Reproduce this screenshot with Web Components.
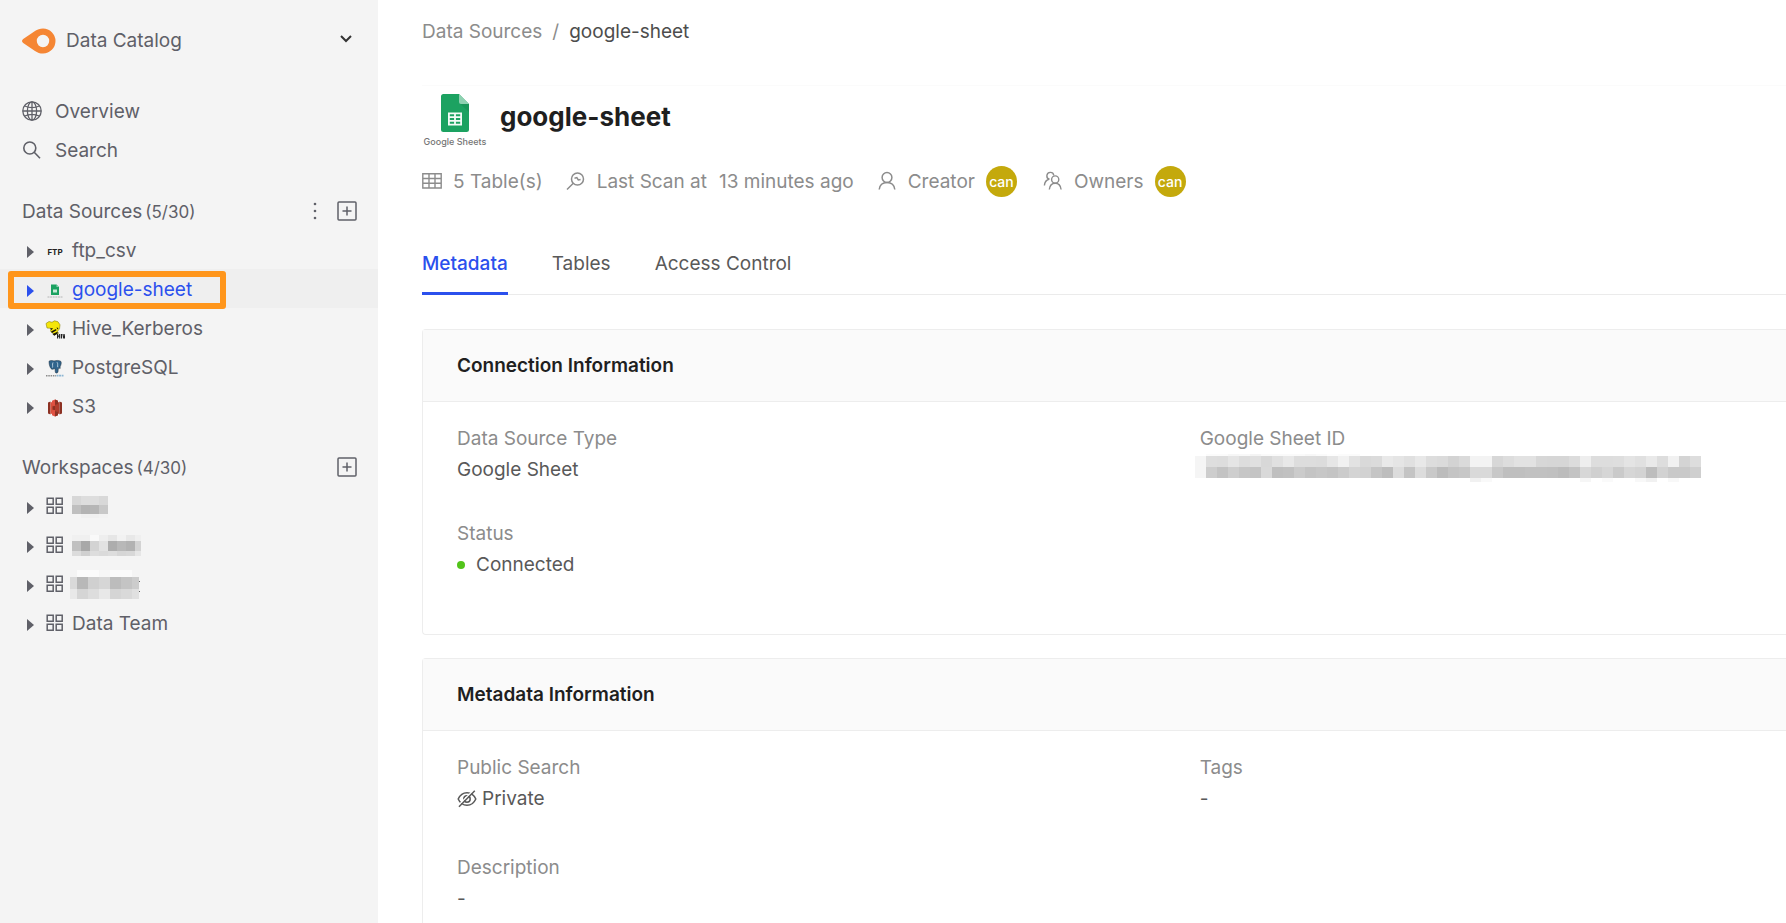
<!DOCTYPE html>
<html lang="en">
<head>
<meta charset="utf-8">
<title>google-sheet - Data Catalog</title>
<style>
  html, body { margin: 0; height: 100%; }
  body {
    font-family: Inter, "Liberation Sans", sans-serif;
    font-size: 19px;
    line-height: 31px;
    color: #595959;
    background: #fff;
    overflow: hidden;
  }
</style>
</head>
<body>
<catalog-app></catalog-app>

<script>
const define = (name, html, setup) => {
  const template = document.createElement('template');
  template.innerHTML = html;
  customElements.define(name, class extends HTMLElement {
    constructor() {
      super();
      this.attachShadow({ mode: 'open' }).append(template.content.cloneNode(true));
    }
    connectedCallback() { if (setup) setup(this, this.shadowRoot); }
  });
};

/* ---------- icons ---------- */
const line = (w, body) => `<g fill="none" stroke="currentColor" stroke-width="${w}">${body}</g>`;
const ICONS = {
  brand: [34, 26, `<path fill="#f58634" fill-rule="evenodd" d="M21 0.5a12.5 12.5 0 1 1 0 25c-3 0-5.600-1-8-2.600L1.200 15c-1.600-1-1.600-3 0-4L13 3.100C15.400 1.500 18 .5 21 .5zM21 6.800a6.200 6.200 0 1 0 0 12.400a6.200 6.200 0 0 0 0-12.400z"/>`],
  chevron: [14, 13, `<path d="M2 2l5 5 5-5" fill="none" stroke="#333" stroke-width="2"/>`],
  globe: [20, 20, line(1.3, `<circle cx="10" cy="10" r="9.200"/><ellipse cx="10" cy="10" rx="4.600" ry="9.200"/><path d="M10 .8v18.400M.8 10h18.400M2.700 5c4.500 2 10.100 2 14.600 0M2.700 15c4.500-2 10.100-2 14.600 0"/>`)],
  search: [20, 20, line(1.6, `<circle cx="7.800" cy="8" r="6"/><path d="M12.200 12.300L18 18.200"/>`)],
  dots: [4, 18, `<g fill="currentColor"><circle cx="2" cy="2" r="1.300"/><circle cx="2" cy="9" r="1.300"/><circle cx="2" cy="16" r="1.300"/></g>`],
  plus: [20, 20, line(1.5, `<rect x="1" y="1" width="18" height="18" rx="1"/><path d="M10 5.500v9M5.500 10h9"/>`)],
  caret: [8, 12, `<path fill="currentColor" d="M0 0L7 6L0 12z"/>`],
  grid: [20, 20, line(1.5, `<path d="M2.200 2.200h6v6h-6zM11.200 2.200h6v6h-6zM2.200 11.200h6v6h-6zM11.200 11.200h6v6h-6z"/>`)],
  sheets: [28, 38, `<path fill="#1ca261" d="M2.500 0H18l10 10v25.500a2.500 2.500 0 0 1-2.500 2.500h-23A2.500 2.500 0 0 1 0 35.500v-33A2.500 2.500 0 0 1 2.500 0z"/><path fill="#8ed1b1" d="M18 0l10 10H20a2 2 0 0 1-2-2z"/><path fill="#168a52" d="M19.500 10H28v8z" opacity=".5"/><path fill="#f4fbf7" fill-rule="evenodd" d="M7 18.500h14v13H7zM8.800 20.300v1.900h4.300v-1.900zM14.900 20.300v1.900h4.300v-1.900zM8.800 24v1.900h4.300V24zM14.900 24v1.900h4.300V24zM8.800 27.700v2h4.300v-2zM14.900 27.700v2h4.300v-2z"/>`],
  sheetsMini: [20, 20, `<path fill="#1ca261" d="M6 3.500h5.500L14 6v8H6z"/><path fill="#8ed1b1" d="M11.500 3.500L14 6h-2.500z"/><path fill="#c8ead8" d="M8 8.500h4v3H8z"/><path stroke="#b5b5b5" stroke-width="1" stroke-dasharray="2 .6" d="M2.500 16h15"/>`],
  hive: [20, 20, `<path fill="#f5e60a" stroke="#8a8210" stroke-width=".6" d="M1 3.500L4 1.500l3 .8 2.500-1.500 3.500 1 2 3-.5 4-2 2.500 1 2-4 1.500-4-3.500 .5-3L2 8z"/><path fill="#171405" d="M5 8.500l3-.5-1.500 2zM6 11.500l5-2.500 .5 1.300-4.500 2.700zM7.500 14l5-2.200 .3 1.500-3.500 2.500zM11.500 7.500l2 .5-1 1.500z"/><path fill="#222" d="M12 14h1.200v1.600h.9V14h1.200v4.500h-1.200v-1.700h-.9v1.700H12zM16 14h1.100v4.500H16zM17.500 14h1.100l.4 2.600.4-2.600h.6v4.500h-1.800z"/>`],
  postgres: [20, 20, `<path fill="#31648c" stroke="#1d2f3d" stroke-width=".5" d="M4 2.200C5.500 1 8 1.600 9 2c2-.8 5-.8 6.800.3 1 1.400.2 4-1 6l.8.7-2.300.6-.3 3.400c-.4 1.400-2.300 1.500-2.700.2l-.3-3.700-1.500.5C6 11.500 4 7 4 2.200z"/><path d="M8 3.500c-1 2 0 3.700-.5 5M12 3.200c1.300 1.600.3 3.200.8 5" fill="none" stroke="#d4e4ef" stroke-width=".8"/><path stroke="#8b8b8b" stroke-width="1.400" stroke-dasharray="1.500 .8" d="M1 16.700h10"/><path stroke="#8db6d3" stroke-width="1.700" stroke-dasharray="2 .6" d="M11.500 16.700h7"/>`],
  s3: [20, 20, `<path fill="#8c3123" d="M3 4.500l2.500-1v13l-2.500-1z"/><path fill="#d9503d" d="M5.500 4l4.500 1v10l-4.500 1z"/><path fill="#b03c2c" d="M10 5l4.500-1v12L10 15z"/><path fill="#8c3123" d="M14.500 3.500l2.500 1v11l-2.500 1z"/><path fill="#e05243" d="M10 1.500l3 1.300v3.700L10 7 7 6.500V2.800zM10 18.500l3-1.300v-3.700l-3-.5-3 .5v3.700z"/><path fill="#8c3123" d="M10 1.500l3 1.300v3.700L10 7zM10 18.500l3-1.300v-3.700l-3-.5zM7.500 8.300L10 8v4l-2.500-.3z"/>`],
  table: [20, 16, line(1.4, `<path d="M.8 .8h18.400v14.200H.8zM.8 5.500h18.400M.8 10.300h18.400M7 .8V15M13 .8V15"/>`)],
  scan: [20, 20, line(1.5, `<circle cx="11.500" cy="8" r="6"/><path d="M7.300 12.300L1 18.500M8.500 7.200l2.300-.6 1.500 2.400 2.300-.5"/>`)],
  user: [20, 20, line(1.5, `<circle cx="10" cy="6.500" r="4.900"/><path d="M2.200 18.500c.5-4.300 3.500-7 7.800-7s7.300 2.700 7.800 7"/>`)],
  team: [20, 20, line(1.4, `<circle cx="12.200" cy="8.500" r="3.600"/><path d="M6.300 18.500c.4-3.800 2.600-6.300 5.900-6.300s5.500 2.500 5.900 6.300M10.800 4.300A3.500 3.500 0 1 0 6.500 8.300M5.900 8.200c-2.600.7-4.200 2.800-4.500 6.300"/>`)],
  hidden: [20, 20, line(1.5, `<path d="M1.200 10C3 6 6 3.700 10 3.700S17 6 18.800 10C17 14 14 16.300 10 16.300S3 14 1.200 10z"/><circle cx="10" cy="10" r="3.200"/><path d="M16.300 1.500L.8 17" stroke="#fff" stroke-width="1.500"/><path d="M17.800 1.700L2 17.800"/>`)]
};

define('ui-icon', `<style>:host{display:block;flex:none}svg{display:block}</style>`, (el, root) => {
  const [w, h, body] = ICONS[el.getAttribute('name')];
  root.querySelector('svg')?.remove();
  root.innerHTML += `<svg width="${w}" height="${h}" viewBox="0 0 ${w} ${h}" aria-hidden="true">${body}</svg>`;
});

/* Redacted text: rows of [y, height, cells], each cell [x, width, grey as two hex digits]. */
const run = (x, w, greys) => greys.split(' ').map((g, i) => [x + i * w, w, g]);
const MOSAICS = {
  a: [40, 39, [[9, 9, run(2, 9, 'd7 dd dd d8')], [18, 9, run(2, 9, 'bf b3 b6 c8')], [27, 4, run(2, 9, 'f4 f0 f0 f2')]]],
  b: [72, 39, [[9, 6, run(2, 9, 'f0 f0 f9 ee e6 f2 e8')], [9, 6, [[65, 6, 'ef']]], [15, 10, run(2, 9, 'c0 a8 d3 e2 ad b8 b2')], [15, 10, [[65, 6, 'd3']]], [25, 5, run(2, 9, 'dc d0 dd da dd d6 d8')], [25, 5, [[65, 6, 'e6']]]]],
  c: [72, 39, [[5, 7, run(7, 11, 'fb fb f6 fa fa')], [12, 12, [[0, 7, 'd9'], [62, 7, 'cc']]], [12, 12, run(7, 11, 'b8 d0 d6 bc c4')], [24, 10, [[0, 7, 'e8'], [62, 7, 'e0']]], [24, 10, run(7, 11, 'd5 dd e8 d5 d9')], [16, 1, [[69, 1, '60']]], [26, 1, [[69, 1, '60']]]]],
  id: [520, 31, [
    [0, 2, run(12, 11, 'fb fb f6 f8 f4 fa fa fa fa f7 fa fd fb fb')],
    [2, 11, run(1, 11, 'f5 de dd e5 dd e0 d8 e0 e8 dd dd dc e6 f1 e2 d9 db e9 e5 e0 e8 dd db d3 da f3 f3 d7 dd e2 e2 d7 d6 d6 dc ee dd dd de e4 e0 e9 dd f1 d4 dd')],
    [13, 11, run(1, 11, 'f5 cd c3 ce c6 c4 d9 bf c1 cb c4 c7 c4 cb d4 d2 c5 bd dc c4 dc c9 bc c4 c7 d9 d9 c8 bf bf c1 c1 c0 bc c3 d7 d0 d6 ca d6 d3 bd d2 c9 c9 cf')],
    [24, 4, [[276, 11, 'f1'], [287, 11, 'f9'], [386, 11, 'f6'], [408, 11, 'fa'], [441, 11, 'f8'], [452, 11, 'f1'], [474, 11, 'f8']]]]]
};
define('redacted-text', `<style>:host{display:block;flex:none}svg{display:block}</style>`, (el, root) => {
  const [w, h, rows] = MOSAICS[el.getAttribute('pattern')];
  const rects = rows.map(([y, rh, cells]) => cells.map(([x, cw, g]) =>
    `<rect x="${x}" y="${y}" width="${cw}" height="${rh}" fill="#${g}${g}${g}"/>`).join('')).join('');
  root.innerHTML += `<svg width="${w}" height="${h}" shape-rendering="crispEdges" role="img" aria-label="hidden">${rects}</svg>`;
});

/* ---------- sidebar ---------- */
define('nav-link', `
  <style>
    :host { display: block; }
    a { display: flex; align-items: center; gap: 13px; height: 39px; padding-left: 22px; color: inherit; text-decoration: none; }
    .text { padding-top: 2px; }
  </style>
  <a href="#"><slot name="icon"></slot><span class="text"><slot></slot></span></a>`);

define('tree-item', `
  <style>
    :host { display: block; position: relative; }
    :host([selected]) { background: #efefef; color: #2b50ed; }
    a { display: flex; align-items: center; height: 39px; padding-left: 27px; color: inherit; text-decoration: none; }
    ui-icon { padding-top: 4px; margin-right: 10px; }
    .icon { display: flex; align-items: center; justify-content: center; width: 20px; margin-right: 7px; }
    .text { padding-top: 2px; }
    .mark { position: absolute; box-sizing: border-box; left: 8px; top: 2px; width: 218px; height: 38px; border: 6px solid #ff961c; border-radius: 3px; z-index: 1; pointer-events: none; }
    :host(:not([selected])) .mark { display: none; }
  </style>
  <a href="#"><ui-icon name="caret"></ui-icon><span class="icon"><slot name="icon"></slot></span><span class="text"><slot></slot></span></a>
  <div class="mark"></div>`);

define('tree-section', `
  <style>
    :host { display: block; margin-top: 22px; }
    header { display: flex; align-items: center; height: 39px; padding: 0 21px 0 22px; }
    h2 { flex: 1; margin: 0; padding-top: 2px; font-size: inherit; font-weight: 400; }
    small { margin-left: 3px; font-size: 17px; }
    button { display: flex; padding: 0; border: 0; background: none; color: inherit; }
    .more { margin-right: 20px; }
    :host(:not([menu])) .more { display: none; }
  </style>
  <header>
    <h2><slot name="title"></slot><small><slot name="count"></slot></small></h2>
    <button class="more" aria-label="More"><ui-icon name="dots"></ui-icon></button>
    <button aria-label="Add"><ui-icon name="plus"></ui-icon></button>
  </header>
  <slot></slot>`);

define('side-bar', `
  <style>
    :host { display: block; background: #f4f4f4; color: #5f6068; padding-top: 21px; }
    .brand { display: flex; align-items: center; width: 100%; height: 39px; margin-bottom: 31px; padding: 0 25px 0 22px; border: 0; background: none; font: inherit; color: inherit; text-align: left; }
    .brand span { flex: 1; margin-left: 10px; }
    .ftp { font-size: 8px; font-weight: 700; line-height: 20px; color: #222; padding-top: 4px; }
    .logo { padding-top: 4px; }
    redacted-text { margin-left: -2px; }
  </style>
  <button class="brand"><ui-icon name="brand"></ui-icon><span>Data Catalog</span><ui-icon name="chevron"></ui-icon></button>
  <nav>
    <nav-link><ui-icon slot="icon" name="globe"></ui-icon>Overview</nav-link>
    <nav-link><ui-icon slot="icon" name="search"></ui-icon>Search</nav-link>
  </nav>
  <tree-section menu>
    <span slot="title">Data Sources</span><span slot="count">(5/30)</span>
    <tree-item><span slot="icon" class="ftp">FTP</span>ftp_csv</tree-item>
    <tree-item selected><ui-icon slot="icon" class="logo" name="sheetsMini"></ui-icon>google-sheet</tree-item>
    <tree-item><ui-icon slot="icon" class="logo" name="hive"></ui-icon>Hive_Kerberos</tree-item>
    <tree-item><ui-icon slot="icon" class="logo" name="postgres"></ui-icon>PostgreSQL</tree-item>
    <tree-item><ui-icon slot="icon" class="logo" name="s3"></ui-icon>S3</tree-item>
  </tree-section>
  <tree-section>
    <span slot="title">Workspaces</span><span slot="count">(4/30)</span>
    <tree-item><ui-icon slot="icon" name="grid"></ui-icon><redacted-text pattern="a"></redacted-text></tree-item>
    <tree-item><ui-icon slot="icon" name="grid"></ui-icon><redacted-text pattern="b"></redacted-text></tree-item>
    <tree-item><ui-icon slot="icon" name="grid"></ui-icon><redacted-text pattern="c"></redacted-text></tree-item>
    <tree-item><ui-icon slot="icon" name="grid"></ui-icon>Data Team</tree-item>
  </tree-section>`);

/* ---------- page header ---------- */
define('crumb-trail', `
  <style>
    :host { display: block; padding: 16px 0 38px; border-bottom: 1px solid #fbfbfb; color: #8c8c8c; }
    nav { display: flex; gap: 10px; }
    a { color: inherit; text-decoration: none; }
    b { font-weight: 400; color: #4d4d4d; }
  </style>
  <nav aria-label="Breadcrumb"><a href="#">Data Sources</a><span>/</span><b>google-sheet</b></nav>`);

define('source-heading', `
  <style>
    :host { display: flex; align-items: flex-start; height: 75px; }
    figure { display: flex; flex-direction: column; align-items: center; width: 66px; margin: 8px 12px 0 0; }
    figcaption { font: 500 9px/20px Inter, sans-serif; color: #757575; white-space: nowrap; }
    h1 { margin: 10px 0 0; font-size: 26px; line-height: 42px; font-weight: 700; color: #1f1f1f; }
  </style>
  <figure><ui-icon name="sheets"></ui-icon><figcaption>Google Sheets</figcaption></figure>
  <h1><slot></slot></h1>`);

define('meta-item', `
  <style>:host { display: flex; align-items: center; gap: 11px; white-space: nowrap; }</style>
  <slot></slot>`);

define('user-avatar', `
  <style>:host { display: flex; align-items: center; justify-content: center; width: 31px; height: 31px; margin-right: 3px; border-radius: 50%; background: #c4a90c; color: #fff; font-size: 14px; font-weight: 500; }</style>
  <slot></slot>`);

define('tab-bar', `
  <style>
    :host { display: flex; gap: 44px; margin-top: 39px; border-bottom: 1px solid #ebebeb; }
  </style>
  <slot></slot>`, el => el.setAttribute('role', 'tablist'));

define('tab-item', `
  <style>
    :host { display: block; margin-bottom: -1px; }
    button { display: block; padding: 8px 0 13px; border: 0; border-bottom: 3px solid transparent; background: none; font: inherit; color: inherit; }
    :host([active]) button { color: #2b50ed; border-color: #2b50ed; font-weight: 500; }
  </style>
  <button role="tab"><slot></slot></button>`);

/* ---------- cards ---------- */
define('info-card', `
  <style>
    :host { display: block; margin-bottom: 23px; border: 1px solid #ededed; border-right: 0; border-radius: 4px 0 0 4px; }
    h2 { margin: 0; padding: 20px 34px; border-bottom: 1px solid #ededed; background: #fafafa; font-size: inherit; font-weight: 600; color: #1f1f1f; }
    .body { display: grid; grid-template-columns: 19fr 15fr; row-gap: var(--field-gap, 33px); padding: 21px 0 54px 34px; }
  </style>
  <h2><slot name="title"></slot></h2>
  <div class="body"><slot></slot></div>`);

define('info-field', `
  <style>
    :host { display: block; min-width: 0; }
    .label { color: #8c8c8c; }
    .value { display: flex; align-items: center; height: 31px; }
  </style>
  <div class="label"><slot name="label"></slot></div>
  <div class="value"><slot></slot></div>`);

define('catalog-app', `
  <style>
    :host { display: grid; grid-template-columns: 378px minmax(0, 1fr); height: 100%; overflow: hidden; }
    main { padding-left: 44px; overflow: hidden; }
    .meta { display: flex; gap: 23px; height: 40px; align-items: center; color: #8c8c8c; }
    .wide { display: flex; gap: 12px; }
    tab-bar { margin-bottom: 34px; }
    .dot { width: 8px; height: 8px; border-radius: 50%; background: #52c41a; margin-right: 11px; }
    .eye { margin-right: 5px; }
    .roomy { --field-gap: 38px; }
    redacted-text { margin-left: -6px; }
  </style>
  <side-bar></side-bar>
  <main>
    <crumb-trail></crumb-trail>
    <source-heading>google-sheet</source-heading>
    <div class="meta">
      <meta-item><ui-icon name="table"></ui-icon>5 Table(s)</meta-item>
      <meta-item><ui-icon name="scan"></ui-icon><span class="wide"><span>Last Scan at</span><span>13 minutes ago</span></span></meta-item>
      <meta-item><ui-icon name="user"></ui-icon>Creator<user-avatar>can</user-avatar></meta-item>
      <meta-item><ui-icon name="team"></ui-icon>Owners<user-avatar>can</user-avatar></meta-item>
    </div>
    <tab-bar>
      <tab-item active>Metadata</tab-item>
      <tab-item>Tables</tab-item>
      <tab-item>Access Control</tab-item>
    </tab-bar>
    <info-card>
      <span slot="title">Connection Information</span>
      <info-field><span slot="label">Data Source Type</span>Google Sheet</info-field>
      <info-field><span slot="label">Google Sheet ID</span><redacted-text pattern="id"></redacted-text></info-field>
      <info-field><span slot="label">Status</span><span class="dot"></span>Connected</info-field>
    </info-card>
    <info-card class="roomy">
      <span slot="title">Metadata Information</span>
      <info-field><span slot="label">Public Search</span><ui-icon class="eye" name="hidden"></ui-icon>Private</info-field>
      <info-field><span slot="label">Tags</span>-</info-field>
      <info-field><span slot="label">Description</span>-</info-field>
    </info-card>
  </main>`);
</script>
</body>
</html>
